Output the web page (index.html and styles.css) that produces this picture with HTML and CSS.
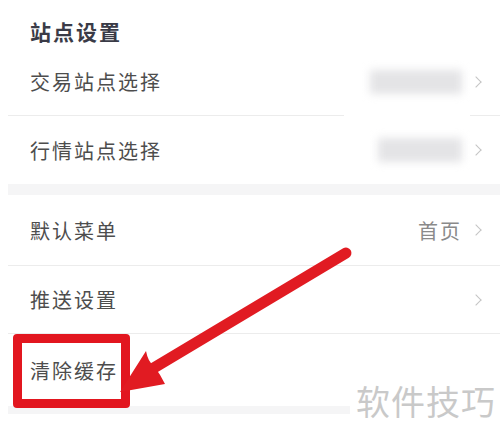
FILE: index.html
```html
<!DOCTYPE html>
<html lang="zh-CN">

<head>
    <meta charset="UTF-8">
    <meta name="viewport" content="width=device-width, initial-scale=1.0">
    <title>站点设置</title>
    <link rel="stylesheet" href="styles.css">
</head>

<body>

    <div class="page">
        <h2 class="section-title">站点设置</h2>

        <div class="list">
            <div class="row">
                <span class="label">交易站点选择</span>
                <span class="value value-hidden"><span class="blur"></span></span>
                <span class="chevron"></span>
            </div>
            <div class="row">
                <span class="label">行情站点选择</span>
                <span class="value value-hidden short"><span class="blur"></span></span>
                <span class="chevron"></span>
            </div>
        </div>

        <div class="band"></div>

        <div class="list">
            <div class="row row-menu">
                <span class="label">默认菜单</span>
                <span class="value">首页</span>
                <span class="chevron"></span>
            </div>
            <div class="row">
                <span class="label">推送设置</span>
                <span class="value"></span>
                <span class="chevron"></span>
            </div>
            <div class="row row-last">
                <span class="label">清除缓存</span>
            </div>
        </div>

        <div class="band band-bottom"></div>

        <!-- annotation over the screenshot -->
        <div class="highlight"></div>
        <div class="watermark">软件技巧</div>
        <svg class="arrow" width="500" height="435" viewBox="0 0 500 435">
            <line x1="346" y1="253" x2="152" y2="369" stroke="#e11b22" stroke-width="11" stroke-linecap="round" />
            <path d="M120 392 L146 351 Q148 362 154 366 Q160 374 165 384 Z" fill="#e11b22" />
        </svg>
    </div>

</body>

</html>
```

FILE: styles.css
```css
body {
    margin: 0;
    background-color: #fff;
    font-family: "Noto Sans CJK SC", sans-serif;
}

.page {
    position: relative;
    width: 500px;
    height: 435px;
    overflow: hidden;
    padding-top: 15px;
    box-sizing: border-box;
}

.section-title {
    margin: 0;
    height: 33px;
    padding-left: 30px;
    font-size: 21px;
    font-weight: 700;
    line-height: 33px;
    letter-spacing: 2px;
    color: #3a3b47;
}

.list {
    margin-left: 8px;
}

.row {
    display: flex;
    align-items: center;
    box-sizing: border-box;
    height: 68px;
    padding-left: 22px;
    padding-right: 16px;
    border-bottom: 1px solid #ececec;
}

.list .row:last-child {
    border-bottom: none;
}

.row-menu {
    height: 71px;
}

.row-last {
    height: 72px;
}

.label {
    flex: 1;
    font-size: 20px;
    letter-spacing: 2px;
    color: #4d4d4d;
}

.value {
    font-size: 20px;
    letter-spacing: 2px;
    color: #8a8a8a;
    margin-right: 10px;
}

.value-hidden {
    display: flex;
    align-items: center;
    justify-content: flex-end;
    width: 118px;
    height: 74px;
    margin-right: 2px;
    padding-right: 8px;
    background-color: #fff;
}

.value-hidden.short {
    height: 52px;
}

.blur {
    display: block;
    width: 92px;
    height: 24px;
    background-color: #e4e4e6;
    filter: blur(4px);
}

.short .blur {
    width: 84px;
}

.chevron {
    width: 7px;
    height: 7px;
    border-top: 1.5px solid #c4c4c4;
    border-right: 1.5px solid #c4c4c4;
    transform: rotate(45deg);
    margin-right: 4px;
}

.band {
    height: 11px;
    margin-left: 8px;
    background-color: #f5f5f6;
}

.band-bottom {
    height: 8px;
}

.highlight {
    position: absolute;
    left: 13px;
    top: 334px;
    width: 99px;
    height: 56px;
    border: 9px solid #e2161f;
    border-radius: 4px;
}

.watermark {
    position: absolute;
    left: 350px;
    top: 376px;
    padding: 0 6px;
    background-color: #fff;
    white-space: nowrap;
    font-size: 34px;
    line-height: 50px;
    letter-spacing: 1px;
    color: #c9c9c9;
}

.arrow {
    position: absolute;
    left: 0;
    top: 0;
}
```
